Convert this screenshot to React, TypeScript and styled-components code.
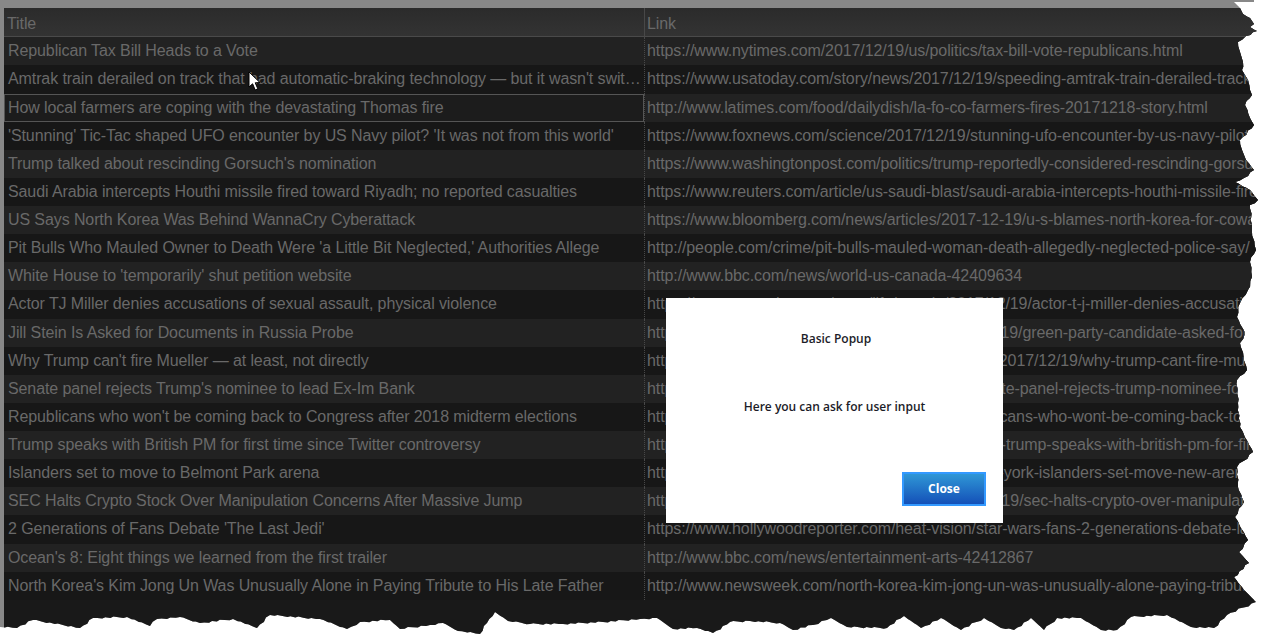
import React from 'react';
import styled, { createGlobalStyle } from 'styled-components';

interface Story {
  title: string;
  link: string;
}

const stories: Story[] = [
  { title: 'Republican Tax Bill Heads to a Vote', link: 'https://www.nytimes.com/2017/12/19/us/politics/tax-bill-vote-republicans.html' },
  { title: "Amtrak train derailed on track that had automatic-braking technology — but it wasn't switched on yet", link: 'https://www.usatoday.com/story/news/2017/12/19/speeding-amtrak-train-derailed-track-had-automatic-braking-technology/' },
  { title: 'How local farmers are coping with the devastating Thomas fire', link: 'http://www.latimes.com/food/dailydish/la-fo-co-farmers-fires-20171218-story.html' },
  { title: "'Stunning' Tic-Tac shaped UFO encounter by US Navy pilot? 'It was not from this world'", link: 'https://www.foxnews.com/science/2017/12/19/stunning-ufo-encounter-by-us-navy-pilot.html' },
  { title: "Trump talked about rescinding Gorsuch's nomination", link: 'https://www.washingtonpost.com/politics/trump-reportedly-considered-rescinding-gorsuch-nomination/' },
  { title: 'Saudi Arabia intercepts Houthi missile fired toward Riyadh; no reported casualties', link: 'https://www.reuters.com/article/us-saudi-blast/saudi-arabia-intercepts-houthi-missile-fired-toward-riyadh' },
  { title: 'US Says North Korea Was Behind WannaCry Cyberattack', link: 'https://www.bloomberg.com/news/articles/2017-12-19/u-s-blames-north-korea-for-cowardly-wannacry-attack' },
  { title: "Pit Bulls Who Mauled Owner to Death Were 'a Little Bit Neglected,' Authorities Allege", link: 'http://people.com/crime/pit-bulls-mauled-woman-death-allegedly-neglected-police-say/' },
  { title: "White House to 'temporarily' shut petition website", link: 'http://www.bbc.com/news/world-us-canada-42409634' },
  { title: 'Actor TJ Miller denies accusations of sexual assault, physical violence', link: 'https://www.usatoday.com/story/life/people/2017/12/19/actor-t-j-miller-denies-accusations-sexual-assault/' },
  { title: 'Jill Stein Is Asked for Documents in Russia Probe', link: 'https://www.nytimes.com/2017/12/politics/2017/12/19/green-party-candidate-asked-for-documents/' },
  { title: "Why Trump can't fire Mueller — at least, not directly", link: 'https://www.washingtonpost.com/news/politics/wp/2017/12/19/why-trump-cant-fire-mueller-at-least/' },
  { title: "Senate panel rejects Trump's nominee to lead Ex-Im Bank", link: 'https://www.politico.com/story/pol/2017/12/19/senate-panel-rejects-trump-nominee-for-ex-im-bank' },
  { title: "Republicans who won't be coming back to Congress after 2018 midterm elections", link: 'https://www.politico.com/interactives2/2017/republicans-who-wont-be-coming-back-to-congress' },
  { title: 'Trump speaks with British PM for first time since Twitter controversy', link: 'https://www.independent.co.uk/news/world/canada-trump-speaks-with-british-pm-for-first-time' },
  { title: 'Islanders set to move to Belmont Park arena', link: 'https://www.newsday.com/sports/hockey/isles/new-york-islanders-set-move-new-arena-belmont' },
  { title: 'SEC Halts Crypto Stock Over Manipulation Concerns After Massive Jump', link: 'https://www.marketwatch.com/news/story/2017/12/19/sec-halts-crypto-over-manipulation-concerns.html' },
  { title: "2 Generations of Fans Debate 'The Last Jedi'", link: 'https://www.hollywoodreporter.com/heat-vision/star-wars-fans-2-generations-debate-last-jedi' },
  { title: "Ocean's 8: Eight things we learned from the first trailer", link: 'http://www.bbc.com/news/entertainment-arts-42412867' },
  { title: "North Korea's Kim Jong Un Was Unusually Alone in Paying Tribute to His Late Father", link: 'http://www.newsweek.com/north-korea-kim-jong-un-was-unusually-alone-paying-tribute-late-father' },
];

// outline of the torn paper edge, clockwise from the top left
const tornEdge: [number, number][] = [
  [0, 0], [1254, 0], [1254, 2], [1234, 2], [1240, 8], [1243, 14], [1250, 18], [1254, 24], [1250, 27], [1257, 31],
  [1246, 36], [1238, 42], [1240, 52], [1243, 62], [1242, 70], [1248, 80], [1250, 90], [1252, 95], [1245, 105],
  [1250, 118], [1254, 125], [1240, 140], [1242, 150], [1246, 160], [1254, 170], [1244, 178], [1235, 182],
  [1250, 190], [1258, 200], [1250, 205], [1252, 225], [1252, 232], [1256, 250], [1250, 262], [1252, 277],
  [1248, 290], [1240, 303], [1237, 317], [1245, 333], [1240, 343], [1247, 370], [1237, 380], [1238, 403],
  [1240, 427], [1253, 452], [1237, 467], [1238, 487], [1244, 502], [1235, 517], [1248, 540], [1239, 552],
  [1249, 563], [1234, 577], [1244, 590], [1256, 602], [1227, 615], [1214, 628], [1191, 627], [1167, 615],
  [1131, 617], [1117, 630], [1101, 630], [1081, 618], [1057, 618], [1044, 630], [1031, 618], [1014, 630],
  [1001, 628], [984, 618], [961, 630], [941, 618], [921, 628], [904, 616], [887, 628], [847, 627], [831, 618],
  [813, 625], [793, 630], [780, 623], [750, 621], [730, 622], [713, 633], [697, 628], [673, 629], [657, 618],
  [640, 619], [603, 622], [563, 624], [530, 624], [508, 621], [495, 612], [487, 623], [480, 634], [458, 631],
  [443, 623], [430, 625], [400, 629], [390, 620], [360, 622], [347, 629], [320, 619], [270, 615], [257, 628],
  [233, 619], [200, 623], [180, 617], [157, 619], [150, 626], [127, 617], [93, 618], [80, 628], [33, 620],
  [17, 628], [0, 627],
];

// adds a little roughness between the traced points
const roughen = (points: [number, number][]) => {
  const out: string[] = [];
  points.forEach(([x, y], i) => {
    const [nx, ny] = points[(i + 1) % points.length];
    out.push(`${x}px ${y}px`);
    const steps = Math.floor(Math.hypot(nx - x, ny - y) / 4);
    if (i < 3 || i === points.length - 1) return;
    for (let s = 1; s < steps; s++) {
      const noise = ((i * 7 + s * 13) % 5) - 2;
      const px = x + ((nx - x) * s) / steps + noise * 0.4;
      const py = y + ((ny - y) * s) / steps + noise * 0.4;
      out.push(`${px.toFixed(1)}px ${py.toFixed(1)}px`);
    }
  });
  return `polygon(${out.join(', ')})`;
};

const GlobalStyle = createGlobalStyle`
  html, body {
    margin: 0;
    background: #fff;
    overflow: hidden;
  }
`;

const Frame = styled.div`
  position: relative;
  box-sizing: border-box;
  width: 1264px;
  height: 642px;
  padding: 8px 0 0 4px;
  background: #888;
  clip-path: ${roughen(tornEdge)};
  font-family: 'Liberation Sans', Arial, sans-serif;
`;

const Grid = styled.div`
  height: 100%;
  background: #191919;
  color: #696969;
  font-size: 16px;
  letter-spacing: -0.1px;
`;

const HeaderRow = styled.div`
  display: grid;
  grid-template-columns: 641px 1fr;
  height: 29.3px;
  box-sizing: border-box;
  background: linear-gradient(#2b2b2b, #333);
  border-bottom: 1px solid #4a4a4a;
`;

const HeaderCell = styled.div<{ $last?: boolean }>`
  padding: 0 2px 0 ${({ $last }) => ($last ? '2px' : '3px')};
  line-height: 31px;
  border-right: ${({ $last }) => ($last ? 'none' : '1px solid #484848')};
`;

const Row = styled.div<{ $odd: boolean }>`
  display: grid;
  grid-template-columns: 641px 1fr;
  height: 28.125px;
  background: ${({ $odd }) => ($odd ? '#222' : '#171717')};
`;

const Cell = styled.div<{ $last?: boolean; $selected?: boolean }>`
  box-sizing: border-box;
  min-width: 0;
  padding: 0 ${({ $last }) => ($last ? '2px' : '3px')} 0 ${({ $last }) => ($last ? '2px' : '4px')};
  line-height: 28px;
  white-space: nowrap;
  overflow: hidden;
  text-overflow: ${({ $last }) => ($last ? 'clip' : 'ellipsis')};
  border-right: ${({ $last }) => ($last ? 'none' : '1px dotted #484848')};
  ${({ $selected }) => $selected && `
    background: #1c1c1c;
    box-shadow: inset 0 0 0 1px #555;
  `}
`;

const Popup = styled.div`
  position: absolute;
  left: 666px;
  top: 298px;
  width: 337px;
  height: 225px;
  box-sizing: border-box;
  display: flex;
  flex-direction: column;
  align-items: center;
  padding: 33px 17px 17px;
  background: #fff;
  color: #1c1c28;
  font-family: 'Open Sans', sans-serif;
  font-size: 12px;
  font-weight: 600;
`;

const PopupTitle = styled.div`
  margin-left: 3px;
  line-height: 16px;
`;

const PopupMessage = styled.div`
  margin-top: 52px;
  line-height: 16px;
`;

const CloseButton = styled.button`
  align-self: flex-end;
  margin-top: auto;
  width: 84px;
  height: 34px;
  border: 2px solid #3399ff;
  background: linear-gradient(#2f97d6, #1450b8);
  color: #fff;
  font: inherit;
  font-weight: 700;
  padding: 0 0 2px;
`;

const Cursor = styled.svg`
  position: absolute;
  left: 248px;
  top: 71px;
  width: 14px;
  height: 22px;
`;

export default function App() {
  return (
    <>
      <GlobalStyle />
      <Frame>
        <Grid>
          <HeaderRow>
            <HeaderCell>Title</HeaderCell>
            <HeaderCell $last>Link</HeaderCell>
          </HeaderRow>
          {stories.map((story, i) => (
            <Row key={story.link} $odd={i % 2 === 0}>
              <Cell $selected={i === 2}>{story.title}</Cell>
              <Cell $last>{story.link}</Cell>
            </Row>
          ))}
        </Grid>
        <Cursor viewBox="0 0 14 22">
          <path d="M1 1 L1 16 L4.6 12.8 L7.2 19 L9.8 17.8 L7.2 11.8 L12 11.6 Z" fill="#fff" stroke="#000" strokeWidth="1" />
        </Cursor>
        <Popup>
          <PopupTitle>Basic Popup</PopupTitle>
          <PopupMessage>Here you can ask for user input</PopupMessage>
          <CloseButton>Close</CloseButton>
        </Popup>
      </Frame>
    </>
  );
}
